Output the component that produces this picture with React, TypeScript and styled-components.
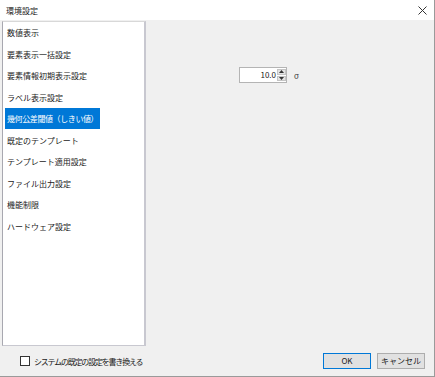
import styled, { createGlobalStyle } from 'styled-components';

const items = [
  '数値表示',
  '要素表示一括設定',
  '要素情報初期表示設定',
  'ラベル表示設定',
  '幾何公差閾値（しきい値）',
  '既定のテンプレート',
  'テンプレート適用設定',
  'ファイル出力設定',
  '機能制限',
  'ハードウェア設定',
];

const App = () => {
  return (
    <>
      <GlobalStyle />
      <Window>
        <TitleBar>
          <Title>環境設定</Title>
          <CloseButton>
            <svg width="9" height="9" viewBox="0 0 9 9">
              <path d="M0.5 0.5 L8.5 8.5 M8.5 0.5 L0.5 8.5" stroke="#333" strokeWidth="1" />
            </svg>
          </CloseButton>
        </TitleBar>
        <Body>
          <ListBox>
            {items.map((item, i) => (
              <ListRow key={item}>
                <ListItem $selected={i === 4}>{item}</ListItem>
              </ListRow>
            ))}
          </ListBox>
          <Pane>
            <SpinRow>
              <SpinBox>
                <SpinValue>10.0</SpinValue>
                <SpinButtons>
                  <SpinButton>
                    <svg width="5" height="3" viewBox="0 0 5 3">
                      <path d="M0 3 L2.5 0 L5 3 Z" fill="#333" />
                    </svg>
                  </SpinButton>
                  <SpinButton>
                    <svg width="5" height="3" viewBox="0 0 5 3">
                      <path d="M0 0 L5 0 L2.5 3 Z" fill="#333" />
                    </svg>
                  </SpinButton>
                </SpinButtons>
              </SpinBox>
              <Unit>σ</Unit>
            </SpinRow>
          </Pane>
        </Body>
        <Footer>
          <CheckLabel>
            <CheckBox />
            <span>システムの既定の設定を書き換える</span>
          </CheckLabel>
          <Buttons>
            <Button $primary>OK</Button>
            <Button>キャンセル</Button>
          </Buttons>
        </Footer>
      </Window>
    </>
  );
};

export default App;

const GlobalStyle = createGlobalStyle`
  body {
    margin: 0;
    background: #ffffff;
    font-family: "Noto Sans CJK JP", "Noto Sans", sans-serif;
  }
`;

const Window = styled.div`
  width: 434px;
  height: 376px;
  background: #f0f0f0;
  border-right: 1px solid #9a9a9a;
  border-bottom: 1px solid #9a9a9a;
  display: flex;
  flex-direction: column;
`;

const TitleBar = styled.div`
  height: 20px;
  flex: none;
  background: #ffffff;
  display: flex;
  align-items: center;
  justify-content: space-between;
  padding: 0 7px 0 6px;
`;

const Title = styled.span`
  font-size: 8px;
  color: #222;
`;

const CloseButton = styled.div`
  display: flex;
  align-items: center;
`;

const Body = styled.div`
  flex: 1;
  display: flex;
  min-height: 0;
`;

const ListBox = styled.div`
  width: 141px;
  margin: 1px 0 0 2px;
  background: #ffffff;
  border-left: 1px solid #a8a8b0;
  border-top: 1px solid #d8d8d8;
  border-right: 2px solid #c8c8d0;
  border-bottom: 1px solid #c8c8d0;
`;

const ListRow = styled.div`
  height: 21.5px;
  display: flex;
  align-items: center;
  padding-left: 2px;
`;

const ListItem = styled.span<{ $selected?: boolean }>`
  font-size: 8px;
  line-height: 21px;
  padding: 0 2px;
  white-space: nowrap;
  letter-spacing: ${(p) => (p.$selected ? '-0.4px' : '0')};
  color: ${(p) => (p.$selected ? '#ffffff' : '#1a1a1a')};
  background: ${(p) => (p.$selected ? '#0078d7' : 'transparent')};
`;

const Pane = styled.div`
  flex: 1;
  padding: 47px 0 0 93px;
`;

const SpinRow = styled.div`
  display: flex;
  align-items: center;
  gap: 7px;
`;

const SpinBox = styled.div`
  width: 46px;
  height: 14px;
  background: #ffffff;
  border: 1px solid #b4b4b4;
  display: flex;
`;

const SpinValue = styled.span`
  flex: 1;
  text-align: right;
  font-size: 8px;
  line-height: 14px;
  padding-right: 1px;
  color: #222;
`;

const SpinButtons = styled.div`
  width: 9px;
  display: flex;
  flex-direction: column;
  gap: 1px;
  padding: 1px 0;
`;

const SpinButton = styled.div`
  flex: 1;
  background: #e3e3e3;
  border: 1px solid #c4c4c4;
  display: flex;
  align-items: center;
  justify-content: center;
`;

const Unit = styled.span`
  font-size: 8px;
  color: #444;
`;

const Footer = styled.div`
  height: 30px;
  flex: none;
  display: flex;
  align-items: center;
  justify-content: space-between;
  padding: 0 9px 0 20px;
`;

const CheckLabel = styled.label`
  display: flex;
  align-items: center;
  gap: 4px;
  font-size: 8px;
  letter-spacing: -1.2px;
  color: #1a1a1a;
`;

const CheckBox = styled.span`
  width: 8px;
  height: 8px;
  background: #ffffff;
  border: 1px solid #333;
`;

const Buttons = styled.div`
  display: flex;
  gap: 6px;
`;

const Button = styled.div<{ $primary?: boolean }>`
  width: 46px;
  height: 14px;
  background: #e1e1e1;
  border: 1px solid ${(p) => (p.$primary ? '#0078d7' : '#adadad')};
  font-size: 8px;
  line-height: 14px;
  text-align: center;
  color: #1a1a1a;
`;
